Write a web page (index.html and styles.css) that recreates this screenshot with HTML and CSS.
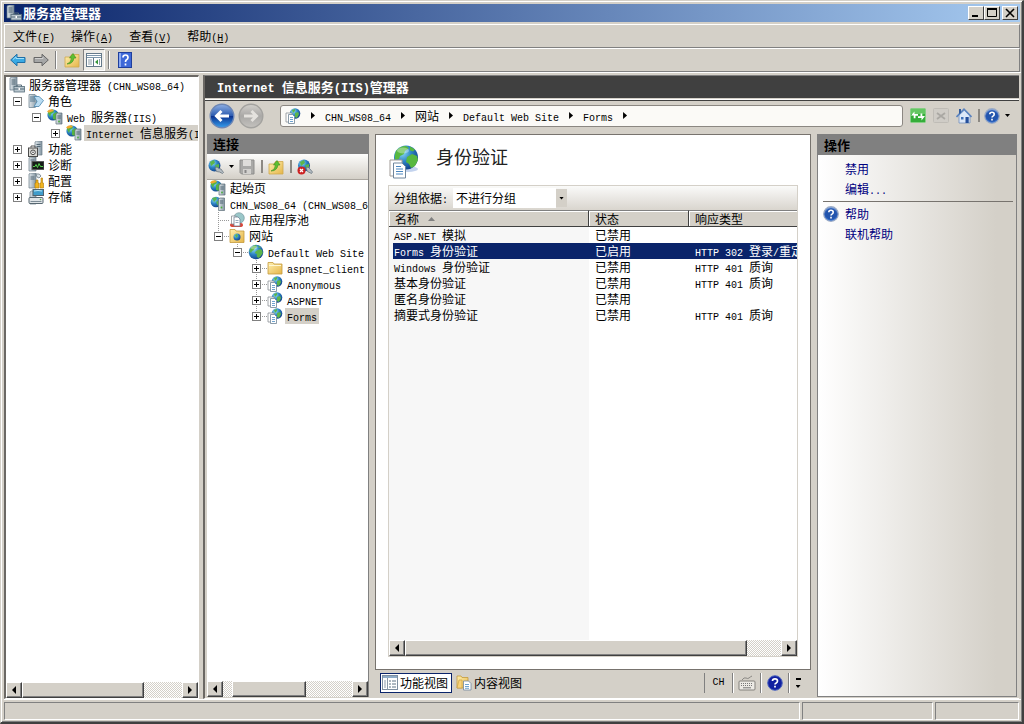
FILE: index.html
```html
<!DOCTYPE html>
<html lang="zh-CN">
<head>
<meta charset="utf-8">
<title>服务器管理器</title>
<link rel="stylesheet" href="styles.css">
</head>
<body>
<svg class="sprite" aria-hidden="true">
  <defs>
    <radialGradient id="g-globe" cx="35%" cy="30%" r="75%"><stop offset="0" stop-color="#8fdcf5"/><stop offset=".5" stop-color="#2c83c4"/><stop offset="1" stop-color="#113f86"/></radialGradient>
    <linearGradient id="g-help" x1="0" y1="0" x2="0" y2="1"><stop offset="0" stop-color="#7fa4e0"/><stop offset=".5" stop-color="#2456b4"/><stop offset="1" stop-color="#3f7ad6"/></linearGradient>
    <linearGradient id="g-back" x1="0" y1="0" x2="0" y2="1"><stop offset="0" stop-color="#8fb0e4"/><stop offset=".48" stop-color="#2d5cb0"/><stop offset=".5" stop-color="#0b2f8c"/><stop offset="1" stop-color="#35a0f0"/></linearGradient>
    <linearGradient id="g-fwd" x1="0" y1="0" x2="0" y2="1"><stop offset="0" stop-color="#d2d0cc"/><stop offset=".5" stop-color="#a9a8a6"/><stop offset="1" stop-color="#c4c2be"/></linearGradient>
    <linearGradient id="g-folder" x1="0" y1="0" x2="1" y2="1"><stop offset="0" stop-color="#fff0b0"/><stop offset="1" stop-color="#e5b548"/></linearGradient>
    <linearGradient id="g-tower" x1="0" y1="0" x2="1" y2="0"><stop offset="0" stop-color="#dfe6ea"/><stop offset="1" stop-color="#8496a2"/></linearGradient>
  </defs>
  <symbol id="i-globe" viewBox="0 0 16 16"><circle cx="8" cy="8" r="7.3" fill="url(#g-globe)"/><path d="M3 3.5Q5 1 8 1l1 2-2 1-1 2-2 1-1 2-1.700-2zM8 7l4-2 2 1 .8 3-2 3-2 2-2-1 0-3-2-1zM10 1.500l3 2-2 .5z" fill="#5cb54a"/><ellipse cx="6" cy="3.600" rx="3.500" ry="1.800" fill="#fff" opacity=".35"/></symbol>
  <symbol id="i-server" viewBox="0 0 16 16"><path d="M1 1l2-1h5v13H1z" fill="url(#g-tower)" stroke="#617786" stroke-width=".7"/><path d="M2.500 3h4M2.500 5h4M2.500 7h4" stroke="#506675"/><rect x="5" y="9.500" width="10.500" height="5.500" fill="#b9c6ce" stroke="#566d7b" stroke-width=".8"/><path d="M8 9.500V8h4.500v1.500M5 12h10.500" fill="none" stroke="#566d7b"/><rect x="9.500" y="11" width="1.500" height="2" fill="#fff"/></symbol>
  <symbol id="i-roles" viewBox="0 0 16 16"><path d="M1 1.500h6l2 2V13l-2 1.500H1z" fill="url(#g-tower)" stroke="#667c8b" stroke-width=".7"/><path d="M2 4h5M2 6h5M2 8h5" stroke="#50778f"/><path d="M6 3.500h5l4.500 4-4.500 6H6l3-5z" fill="#b9dcf2" stroke="#4b87ad" stroke-width=".8"/></symbol>
  <symbol id="i-globe-server" viewBox="0 0 16 16"><circle cx="6" cy="6" r="5.600" fill="url(#g-globe)"/><path d="M.8 4Q2 .6 6 .6L7 3 4 5 3 8zM6 5l4-2 1 3-2 5-3-1z" fill="#55b443"/><path d="M0 2.500Q2 0 5 .3l2 1.400-5 2z" fill="#f0a830"/><path d="M9 5l1.500-1H15v11H9z" fill="url(#g-tower)" stroke="#5d6e78" stroke-width=".7"/><path d="M10.300 7h3.500M10.300 9h3.500" stroke="#4d6272"/><circle cx="12" cy="12.500" r=".9" fill="#4aad3c"/></symbol>
  <symbol id="i-globe-server2" viewBox="0 0 16 16"><circle cx="6" cy="6" r="5.300" fill="url(#g-globe)"/><path d="M2 2l4-1 1 2-3 3zM6 6l3-2 1 3-2 3z" fill="#58b456"/><path d="M8.500 3L10 2h4.500v12.500h-6z" fill="url(#g-tower)" stroke="#5d6e78" stroke-width=".7"/><path d="M9.800 5h3.500M9.800 7h3.500" stroke="#4d6272"/><circle cx="11.500" cy="11.500" r=".9" fill="#4aad3c"/></symbol>
  <symbol id="i-features" viewBox="0 0 16 16"><path d="M7 1l1.500-1H14v14H7z" fill="url(#g-tower)" stroke="#6c7d88" stroke-width=".7"/><path d="M8.500 3.500h4M8.500 5.500h4" stroke="#556977"/><rect x=".5" y="7" width="9" height="8.500" fill="#d8d8d4" stroke="#4b4b4b"/><circle cx="5" cy="11.300" r="2.300" fill="#fff" stroke="#444"/><circle cx="5" cy="11.300" r=".8" fill="#333"/><path d="M3 6.500V5h4v1.500" fill="none" stroke="#555"/></symbol>
  <symbol id="i-diag" viewBox="0 0 16 16"><path d="M1 1l1.500-1H8v14H1z" fill="url(#g-tower)" stroke="#6c7d88" stroke-width=".7"/><path d="M2.500 3h4" stroke="#556977"/><rect x="4" y="4.500" width="12" height="8" fill="#161d16" stroke="#5a5a5a"/><path d="M5 9.500h2l1-2 1.500 3 1.500-4 1.500 3h2.500" fill="none" stroke="#54d04c"/></symbol>
  <symbol id="i-config" viewBox="0 0 16 16"><path d="M1 1l1.500-1H8v15H1z" fill="url(#g-tower)" stroke="#6c7d88" stroke-width=".7"/><path d="M2.500 4h4M2.500 6h4" stroke="#556977"/><path d="M8 1q4-1 5 2l-2 2-2-1z" fill="#d9e2e8" stroke="#6f7d86" stroke-width=".8"/><path d="M8 7h2v3h1v5H7v-5h1zM13 5h1.500v5h1v5h-3.500v-5h1z" fill="#f1b41f" stroke="#b07806" stroke-width=".6"/></symbol>
  <symbol id="i-storage" viewBox="0 0 16 16"><path d="M2 3l1.500-1H8v13H2z" fill="url(#g-tower)" stroke="#6c7d88" stroke-width=".7"/><rect x="5" y=".5" width="10.500" height="6" fill="#3f9dcb" stroke="#50646f"/><path d="M6 2q4-1 8 0" stroke="#bce9fa" fill="none"/><rect x="1" y="8.500" width="14" height="6" rx="1" fill="#dfe4e7" stroke="#566771"/><path d="M2.500 12.500h11" stroke="#7c8b95"/><circle cx="12.500" cy="10.500" r=".8" fill="#55b03f"/></symbol>
  <symbol id="i-folder" viewBox="0 0 16 16"><path d="M1 2.500h5l1 1.500h8v10H1z" fill="url(#g-folder)" stroke="#c49a3c" stroke-width=".8"/><path d="M2 5.500h12" stroke="#fff8d4"/></symbol>
  <symbol id="i-sites" viewBox="0 0 16 16"><path d="M1 1.500h5l1 1.500h8v11.500H1z" fill="url(#g-folder)" stroke="#c49a3c" stroke-width=".8"/><circle cx="8" cy="9" r="3.500" fill="url(#g-globe)"/><path d="M6 7l2-1 1 2-2 2z" fill="#5cb54a"/></symbol>
  <symbol id="i-site-doc" viewBox="0 0 16 16"><circle cx="10" cy="5.500" r="5.300" fill="url(#g-globe)"/><path d="M7 2l3-1 0 2-2 2zM10 5l3-1 1 2-2 4-2-1z" fill="#5cb54a"/><path d="M1 5h6v9H1z" fill="#fff" stroke="#8a9096" stroke-width=".8"/><path d="M3.500 6.500h4l2 2v7h-6z" fill="#fff" stroke="#6f8496" stroke-width=".8"/><path d="M5 9.500h3M5 11.500h3M5 13.500h3" stroke="#4a8bc4" stroke-width=".8"/></symbol>
  <symbol id="i-pool" viewBox="0 0 16 16"><circle cx="10" cy="6" r="5.300" fill="#9ac7c9" stroke="#6f8f96" stroke-width=".6"/><path d="M1 13q0-2 3-2h8q2 0 2 2t-3 2H4q-3 0-3-2z" fill="#d8463a"/><path d="M2.500 4H7v8H2.500z" fill="#fff" stroke="#8a9096" stroke-width=".8"/><path d="M5 5h4l2 2v7H5z" fill="#fff" stroke="#6f8496" stroke-width=".8"/><path d="M6.500 8.500h3M6.500 10.500h3" stroke="#7b96aa" stroke-width=".8"/></symbol>
  <symbol id="i-left" viewBox="0 0 16 16"><path d="M.7 8L7 2.200V5.500h8v5H7v3.300z" fill="#3aaae4" stroke="#1f6fa6"/><path d="M3 7.600l3-2.800v1.700h8" fill="none" stroke="#9fe0fa"/></symbol>
  <symbol id="i-right" viewBox="0 0 16 16"><path d="M15.300 8L9 2.200V5.500H1v5h8v3.300z" fill="#a5a6a6" stroke="#666"/><path d="M2 6.500h8V4.800" fill="none" stroke="#d0d0d0"/></symbol>
  <symbol id="i-up" viewBox="0 0 16 16"><path d="M1 5h5l1.500-2.500H15V15H1z" fill="url(#g-folder)" stroke="#cfa84c" stroke-width=".8"/><path d="M3 12q4-1 4.500-6H5.500L9 1.500 12 6h-2q-1 6-7 6z" fill="#5cc02f" stroke="#3d8b1f" stroke-width=".6"/></symbol>
  <symbol id="i-pane" viewBox="0 0 16 16"><rect x=".5" y="1.500" width="15" height="13" fill="#fff" stroke="#65798a"/><path d="M1 3.500h14M1 5.500h14" stroke="#7c96ab"/><path d="M7.500 6v8.500" stroke="#65798a"/><path d="M2 8h4M2 10h4M2 12h4M13.500 7v6" stroke="#8d9ea9"/><path d="M12 7.500v5L9 10z" fill="#36953a"/></symbol>
  <symbol id="i-qbox" viewBox="0 0 16 16"><rect x="1.500" y=".5" width="13" height="15" fill="#3e68d8" stroke="#203f9c"/><path d="M2 1h2v14H2z" fill="#89a8f2"/><path d="M6 5.500Q6 3 8.500 3T11 5.500Q11 7 9.500 7.800 8.500 8.500 8.500 10M8.500 11.500v2" fill="none" stroke="#fff" stroke-width="1.700"/></symbol>
  <symbol id="i-help" viewBox="0 0 16 16"><circle cx="8" cy="8" r="7.300" fill="url(#g-help)" stroke="#9cabc4" stroke-width="1.200"/><circle cx="8" cy="8" r="5.700" fill="#2355ad"/><path d="M5.800 6.300Q5.800 4.300 8 4.300t2.200 2q0 1.200-1.200 1.800Q8 8.700 8 9.600M8 10.700v1.700" fill="none" stroke="#fff" stroke-width="1.600"/></symbol>
  <symbol id="i-help-dark" viewBox="0 0 16 16"><circle cx="8" cy="8" r="7.300" fill="#111fa0" stroke="#5068c0"/><path d="M5.500 6Q5.500 3.800 8 3.800t2.500 2.200q0 1.300-1.300 2Q8 8.600 8 9.600M8 10.700v1.800" fill="none" stroke="#fff" stroke-width="1.700"/></symbol>
  <symbol id="i-connect" viewBox="0 0 16 16"><circle cx="6.500" cy="6.500" r="6" fill="url(#g-globe)"/><path d="M2 3l4-2 1 3-4 3zM7 6l4-1 0 3-2 3z" fill="#5cb54a"/><path d="M7 9l2-1 2 1.500 2 .5 2.500 3.500-1 1-3-1.500-3-.500z" fill="#b4bcc2" stroke="#626e78" stroke-width=".7"/></symbol>
  <symbol id="i-disconnect" viewBox="0 0 16 16"><circle cx="7" cy="6.500" r="6" fill="url(#g-globe)"/><path d="M3 3l4-2 1 3-4 3zM8 6l4-1 0 3-2 3z" fill="#5cb54a"/><path d="M9 9l2-1 2 2 2.500 3-1 1.500-4-2z" fill="#b4bcc2" stroke="#626e78" stroke-width=".7"/><circle cx="4.500" cy="11.500" r="4" fill="#cc2222"/><path d="M3 10l3 3M6 10l-3 3" stroke="#fff" stroke-width="1.300"/></symbol>
  <symbol id="i-disk" viewBox="0 0 16 16"><path d="M1 1h14v14H2.500L1 13.500z" fill="#a9a9a7" stroke="#8d8d8b"/><rect x="4" y="1" width="8" height="6" fill="#deddda"/><rect x="4" y="10" width="8" height="5" fill="#d2d1ce"/><rect x="5.500" y="11" width="2" height="3" fill="#888"/></symbol>
  <symbol id="i-refresh" viewBox="0 0 16 16"><rect x=".5" y=".5" width="15" height="14" rx="1" fill="#35ad3a" stroke="#86cf84"/><path d="M1 1h14v5H1z" fill="#83d77e" opacity=".6"/><path d="M1 7.500L4.500 3.500v2.500H8v1.800H5.500v2.500H3.700V7.500zM15 8l-3.500 4.500V10H8V8.200h2.500V5.500h1.800V8z" fill="#fff"/></symbol>
  <symbol id="i-stop" viewBox="0 0 16 16"><rect x=".5" y=".5" width="15" height="14" rx="1" fill="#cfccc6" stroke="#bfbcb6"/><path d="M4 5l8 6M12 5l-8 6" stroke="#aaa8a3" stroke-width="1.800"/></symbol>
  <symbol id="i-home" viewBox="0 0 16 16"><path d="M3 7v8h11V7L8.500 2z" fill="#dce8f8" stroke="#7290bc" stroke-width=".8"/><path d="M.5 9L8 1.200 15.500 9" fill="none" stroke="#5a83bf" stroke-width="1.600"/><path d="M3 1h2v4L3 6z" fill="#315b9d"/><rect x="9.500" y="9" width="3.200" height="6" fill="#244f9b"/><rect x="5" y="9" width="2.500" height="2.500" fill="#3e71b8"/></symbol>
  <symbol id="i-keys" viewBox="0 0 18 16"><rect x="1" y="6" width="16" height="9" rx="1" fill="#eceae5" stroke="#83817c"/><path d="M3 8.500h12M3 10.500h12" stroke="#777" stroke-dasharray="1 1"/><path d="M5 12.800h8" stroke="#777"/><path d="M4 5q2-3 4-2t3 0 3-2" fill="none" stroke="#8b8985"/></symbol>
  <symbol id="i-features-view" viewBox="0 0 16 16"><rect x=".5" y=".5" width="15" height="14" fill="#fff" stroke="#7e8ea0"/><path d="M1 2h14" stroke="#8facc8" stroke-width="2"/><path d="M5.500 3v12M2 6h2M2 8h2M2 10h2M2 12h2" stroke="#8b9aa8"/><path d="M7 6h2M10 6h4M7 9h2M10 9h4M7 12h2M10 12h4" stroke="#5f7284"/></symbol>
  <symbol id="i-content-view" viewBox="0 0 16 16"><path d="M1 1h4l1 1.500h6V13H1z" fill="url(#g-folder)" stroke="#c49a3c" stroke-width=".8"/><path d="M1 13L3 5h3v8z" fill="#f8d27a" stroke="#c49a3c" stroke-width=".6"/><path d="M7.500 6h5l2.500 2.500V15H7.500z" fill="#fff" stroke="#7286a0" stroke-width=".8"/><path d="M9 9.500h4M9 11.500h4M9 13.300h4" stroke="#4a8bc4" stroke-width=".8"/></symbol>
</svg>

<div class="window">
  <header class="titlebar">
    <svg class="icon" aria-hidden="true"><use href="#i-server"/></svg>
    <h1 class="titlebar-text">服务器管理器</h1>
    <button class="win-btn" aria-label="最小化"><svg viewBox="0 0 12 10"><path d="M2 8h6" stroke="#000" stroke-width="2"/></svg></button>
    <button class="win-btn" aria-label="最大化"><svg viewBox="0 0 12 10"><path d="M1.500 1.500h9v7h-9zM1 1.500h10" fill="none" stroke="#000"/><path d="M1 1h10" stroke="#000" stroke-width="2"/></svg></button>
    <button class="win-btn win-close" aria-label="关闭"><svg viewBox="0 0 12 10"><path d="M2 1l8 8M10 1L2 9" stroke="#000" stroke-width="1.600"/></svg></button>
  </header>

  <nav class="menubar">
    <button class="menu">文件<span class="en">(<u>F</u>)</span></button>
    <button class="menu">操作<span class="en">(<u>A</u>)</span></button>
    <button class="menu">查看<span class="en">(<u>V</u>)</span></button>
    <button class="menu">帮助<span class="en">(<u>H</u>)</span></button>
  </nav>

  <div class="toolbar">
    <button class="tool" aria-label="后退"><svg class="icon" aria-hidden="true"><use href="#i-left"/></svg></button>
    <button class="tool" aria-label="前进"><svg class="icon" aria-hidden="true"><use href="#i-right"/></svg></button>
    <span class="sep"></span>
    <button class="tool" aria-label="上一级"><svg class="icon" aria-hidden="true"><use href="#i-up"/></svg></button>
    <button class="tool tool-on" aria-label="显示/隐藏控制台树"><svg class="icon" aria-hidden="true"><use href="#i-pane"/></svg></button>
    <span class="sep"></span>
    <button class="tool" aria-label="帮助"><svg class="icon" aria-hidden="true"><use href="#i-qbox"/></svg></button>
  </div>

  <div class="main">
    <aside class="console">
      <ul class="tree">
        <li><div class="node"><svg class="icon" aria-hidden="true"><use href="#i-server"/></svg><span class="label">服务器管理器<span class="en"> (CHN_WS08_64)</span></span></div>
          <ul class="root">
            <li><div class="node"><span class="slot"><button class="exp" aria-label="折叠"></button></span><svg class="icon" aria-hidden="true"><use href="#i-roles"/></svg><span class="label">角色</span></div>
              <ul>
                <li><div class="node"><span class="slot"><button class="exp" aria-label="折叠"></button></span><svg class="icon" aria-hidden="true"><use href="#i-globe-server"/></svg><span class="label"><span class="en">Web </span>服务器<span class="en">(IIS)</span></span></div>
                  <ul>
                    <li><div class="node"><span class="slot"><button class="exp plus" aria-label="展开"></button></span><svg class="icon" aria-hidden="true"><use href="#i-globe-server"/></svg><span class="label selected"><span class="en">Internet </span>信息服务<span class="en">(IIS)</span>管理器</span></div></li>
                  </ul>
                </li>
              </ul>
            </li>
            <li><div class="node"><span class="slot"><button class="exp plus" aria-label="展开"></button></span><svg class="icon" aria-hidden="true"><use href="#i-features"/></svg><span class="label">功能</span></div></li>
            <li><div class="node"><span class="slot"><button class="exp plus" aria-label="展开"></button></span><svg class="icon" aria-hidden="true"><use href="#i-diag"/></svg><span class="label">诊断</span></div></li>
            <li><div class="node"><span class="slot"><button class="exp plus" aria-label="展开"></button></span><svg class="icon" aria-hidden="true"><use href="#i-config"/></svg><span class="label">配置</span></div></li>
            <li><div class="node"><span class="slot"><button class="exp plus" aria-label="展开"></button></span><svg class="icon" aria-hidden="true"><use href="#i-storage"/></svg><span class="label">存储</span></div></li>
          </ul>
        </li>
      </ul>
      <div class="scrollbar">
        <button class="sb-btn" aria-label="向左滚动"><svg viewBox="0 0 8 8"><path d="M6 0v8L2 4z"/></svg></button>
        <div class="track"><div class="thumb thumb-console"></div></div>
        <button class="sb-btn" aria-label="向右滚动"><svg viewBox="0 0 8 8"><path d="M2 0v8l4-4z"/></svg></button>
      </div>
    </aside>

    <section class="iis">
      <h2 class="iis-title"><span class="en">Internet </span>信息服务<span class="en">(IIS)</span>管理器</h2>
      <div class="nav">
        <div class="travel">
          <button class="round" aria-label="后退"><svg viewBox="0 0 26 26"><circle cx="13" cy="13" r="11.800" fill="url(#g-back)" stroke="#6d86b4" stroke-width="1.400"/><path d="M20 13H8M12.500 8l-5 5 5 5" fill="none" stroke="#fff" stroke-width="3"/></svg></button>
          <button class="round" aria-label="前进"><svg viewBox="0 0 26 26"><circle cx="13" cy="13" r="11.800" fill="url(#g-fwd)" stroke="#a3a29f" stroke-width="1.400"/><path d="M6 13h12M13.500 8l5 5-5 5" fill="none" stroke="#e4e2de" stroke-width="3"/></svg></button>
        </div>
        <div class="address">
          <svg class="icon" aria-hidden="true"><use href="#i-site-doc"/></svg>
          <span class="chev"></span><a class="crumb" href="#server"><span class="en">CHN_WS08_64</span></a>
          <span class="chev"></span><a class="crumb" href="#sites">网站</a>
          <span class="chev"></span><a class="crumb" href="#default"><span class="en">Default Web Site</span></a>
          <span class="chev"></span><a class="crumb" href="#forms"><span class="en">Forms</span></a>
          <span class="chev"></span>
        </div>
        <div class="nav-tools">
          <button class="tool" aria-label="刷新"><svg class="icon" aria-hidden="true"><use href="#i-refresh"/></svg></button>
          <button class="tool" aria-label="停止"><svg class="icon" aria-hidden="true"><use href="#i-stop"/></svg></button>
          <button class="tool" aria-label="主页"><svg class="icon" aria-hidden="true"><use href="#i-home"/></svg></button>
          <span class="bar"></span>
          <button class="tool tool-drop" aria-label="帮助"><svg class="icon" aria-hidden="true"><use href="#i-help"/></svg><span class="drop"></span></button>
        </div>
      </div>

      <div class="panes">
        <aside class="connections">
          <h3 class="pane-title">连接</h3>
          <div class="conn-tools">
            <button class="tool tool-drop" aria-label="连接"><svg class="icon" aria-hidden="true"><use href="#i-connect"/></svg><span class="drop"></span></button>
            <button class="tool" aria-label="保存连接"><svg class="icon" aria-hidden="true"><use href="#i-disk"/></svg></button>
            <span class="bar"></span>
            <button class="tool" aria-label="向上"><svg class="icon" aria-hidden="true"><use href="#i-up"/></svg></button>
            <span class="bar"></span>
            <button class="tool" aria-label="断开连接"><svg class="icon" aria-hidden="true"><use href="#i-disconnect"/></svg></button>
          </div>
          <ul class="tree lines">
            <li><div class="node"><svg class="icon" aria-hidden="true"><use href="#i-globe-server"/></svg><span class="label">起始页</span></div></li>
            <li><div class="node"><svg class="icon" aria-hidden="true"><use href="#i-globe-server2"/></svg><span class="label"><span class="en">CHN_WS08_64 (CHN_WS08_64)</span></span></div>
              <ul class="root">
                <li><div class="node"><span class="slot"></span><svg class="icon" aria-hidden="true"><use href="#i-pool"/></svg><span class="label">应用程序池</span></div></li>
                <li><div class="node"><span class="slot"><button class="exp" aria-label="折叠"></button></span><svg class="icon" aria-hidden="true"><use href="#i-sites"/></svg><span class="label">网站</span></div>
                  <ul>
                    <li><div class="node"><span class="slot"><button class="exp" aria-label="折叠"></button></span><svg class="icon" aria-hidden="true"><use href="#i-globe"/></svg><span class="label"><span class="en">Default Web Site</span></span></div>
                      <ul>
                        <li><div class="node"><span class="slot"><button class="exp plus" aria-label="展开"></button></span><svg class="icon" aria-hidden="true"><use href="#i-folder"/></svg><span class="label"><span class="en">aspnet_client</span></span></div></li>
                        <li><div class="node"><span class="slot"><button class="exp plus" aria-label="展开"></button></span><svg class="icon" aria-hidden="true"><use href="#i-site-doc"/></svg><span class="label"><span class="en">Anonymous</span></span></div></li>
                        <li><div class="node"><span class="slot"><button class="exp plus" aria-label="展开"></button></span><svg class="icon" aria-hidden="true"><use href="#i-site-doc"/></svg><span class="label"><span class="en">ASPNET</span></span></div></li>
                        <li><div class="node"><span class="slot"><button class="exp plus" aria-label="展开"></button></span><svg class="icon" aria-hidden="true"><use href="#i-site-doc"/></svg><span class="label selected"><span class="en">Forms</span></span></div></li>
                      </ul>
                    </li>
                  </ul>
                </li>
              </ul>
            </li>
          </ul>
          <div class="scrollbar">
            <button class="sb-btn" aria-label="向左滚动"><svg viewBox="0 0 8 8"><path d="M6 0v8L2 4z"/></svg></button>
            <div class="track"><div class="thumb thumb-conn"></div></div>
            <button class="sb-btn" aria-label="向右滚动"><svg viewBox="0 0 8 8"><path d="M2 0v8l4-4z"/></svg></button>
          </div>
        </aside>

        <main class="center">
          <div class="feature">
            <div class="feature-head">
              <svg class="feature-icon" viewBox="0 0 32 34" aria-hidden="true"><ellipse cx="19" cy="24" rx="10" ry="3" fill="#c3d3ee"/><circle cx="17" cy="12.500" r="12" fill="url(#g-globe)"/><path d="M7 6q4-5 10-5l3 2-4 3-1 3-4 2-1 3-4 1q-1-5 1-9zM18 12l5-3 5 2 1 4-3 6-4 2-2-4-3-2zM21 1.500l5 3-2 2-3-1z" fill="#57b83f"/><ellipse cx="14" cy="5.500" rx="6" ry="3" fill="#fff" opacity=".35"/><path d="M1 15h12v16H1z" fill="#fff" stroke="#a19b96"/><path d="M4.500 18H13l3.500 3.500V33h-12z" fill="#fff" stroke="#71879d"/><path d="M7 21.500h5M7 24h7M7 26.500h7M7 29h7" stroke="#4a86bf"/></svg>
              <h2 class="feature-title">身份验证</h2>
            </div>
            <div class="list">
              <div class="groupbar">
                <label for="group">分组依据<span class="en">:</span></label>
                <select id="group" class="select"><option>不进行分组</option></select><span class="select-arrow"><span class="drop"></span></span>
              </div>
              <div class="table-wrap">
                <table class="table">
                  <thead><tr><th class="c-name">名称<span class="sort"></span></th><th class="c-state">状态</th><th>响应类型</th></tr></thead>
                  <tbody>
                    <tr><td><span class="en">ASP.NET </span>模拟</td><td>已禁用</td><td></td></tr>
                    <tr class="row-selected"><td><span class="en">Forms </span>身份验证</td><td>已启用</td><td><span class="en">HTTP 302 </span>登录<span class="en">/</span>重定向</td></tr>
                    <tr><td><span class="en">Windows </span>身份验证</td><td>已禁用</td><td><span class="en">HTTP 401 </span>质询</td></tr>
                    <tr><td>基本身份验证</td><td>已禁用</td><td><span class="en">HTTP 401 </span>质询</td></tr>
                    <tr><td>匿名身份验证</td><td>已禁用</td><td></td></tr>
                    <tr><td>摘要式身份验证</td><td>已禁用</td><td><span class="en">HTTP 401 </span>质询</td></tr>
                  </tbody>
                </table>
              </div>
              <div class="scrollbar">
                <button class="sb-btn" aria-label="向左滚动"><svg viewBox="0 0 8 8"><path d="M6 0v8L2 4z"/></svg></button>
                <div class="track"><div class="thumb thumb-list"></div></div>
                <button class="sb-btn" aria-label="向右滚动"><svg viewBox="0 0 8 8"><path d="M2 0v8l4-4z"/></svg></button>
              </div>
            </div>
          </div>
          <div class="views">
            <button class="view view-on"><svg class="icon" aria-hidden="true"><use href="#i-features-view"/></svg>功能视图</button>
            <button class="view"><svg class="icon" aria-hidden="true"><use href="#i-content-view"/></svg>内容视图</button>
            <div class="langbar">
              <button class="lang"><span class="en">CH</span></button>
              <button class="lang" aria-label="键盘"><svg class="keys" aria-hidden="true"><use href="#i-keys"/></svg></button>
              <button class="lang" aria-label="帮助"><svg class="icon" aria-hidden="true"><use href="#i-help-dark"/></svg></button>
              <button class="lang lang-more" aria-label="选项"><span class="dash"></span><span class="drop"></span></button>
            </div>
          </div>
        </main>

        <aside class="actions">
          <h3 class="pane-title">操作</h3>
          <ul class="action-list">
            <li><a href="#disable">禁用</a></li>
            <li><a href="#edit">编辑<span class="en">...</span></a></li>
          </ul>
          <ul class="action-list action-help">
            <li><svg class="icon" aria-hidden="true"><use href="#i-help"/></svg><a href="#help">帮助</a></li>
            <li><a href="#online">联机帮助</a></li>
          </ul>
        </aside>
      </div>
    </section>
  </div>

  <footer class="statusbar">
    <div class="cell"></div>
    <div class="cell cell-mid"></div>
    <div class="cell cell-end"></div>
  </footer>
</div>
</body>
</html>
```

FILE: styles.css
```css
* { box-sizing: border-box; }

body {
  margin: 0;
  font: 12px/16px "Noto Sans CJK SC", sans-serif;
  color: #000;
  background: #d4d0c8;
}

.sprite { position: absolute; width: 0; height: 0; }

h1, h2, h3, ul { margin: 0; padding: 0; }
ul { list-style: none; }
svg { display: block; flex: none; }

button {
  margin: 0;
  padding: 0;
  border: 0;
  background: none;
  font: inherit;
  color: inherit;
}

/* Latin runs are half as wide as a Chinese character;
   the zero line height keeps them from making a mixed line taller */
.en {
  font-family: "Liberation Mono", monospace;
  font-size: 10px;
  line-height: 0;
  white-space: pre;
}

.icon { width: 16px; height: 16px; }

.drop {
  width: 5px;
  height: 3px;
  background: #000;
  clip-path: polygon(0 0, 100% 0, 50% 100%);
}

/* Window frame */
.window {
  display: flex;
  flex-direction: column;
  height: 100vh;
  padding: 3px 1px 2px 3px;
  border: 1px solid #d4d0c8;
  border-right: 2px solid #404040;
  border-bottom: 2px solid #404040;
  box-shadow: inset 1px 1px #fff, inset -1px -1px #808080;
  background: #d4d0c8;
}

.titlebar {
  display: flex;
  align-items: center;
  flex: none;
  height: 18px;
  padding: 0 2px;
  margin-right: 1px;
  background: linear-gradient(to right, #0a246a, #a6caf0);
}

.titlebar-text {
  flex: 1;
  padding-left: 1px;
  font-size: 13px;
  line-height: 18px;
  color: #fff;
}

.win-btn {
  width: 16px;
  height: 14px;
  padding: 1px;
  border: 1px solid #fff;
  border-right-color: #404040;
  border-bottom-color: #404040;
  background: #d4d0c8;
}

.win-btn svg { width: 12px; height: 10px; }
.win-close { margin-left: 2px; }

.menubar,
.toolbar {
  display: flex;
  align-items: center;
  flex: none;
  height: 24px;
  margin-right: 1px;
  border: 1px solid #fff;
  border-right-color: #808080;
  border-bottom-color: #808080;
}

.menubar { gap: 16px; margin-top: 2px; padding-left: 8px; }
.toolbar { padding-left: 1px; }

.tool {
  display: flex;
  align-items: center;
  justify-content: center;
  height: 22px;
  width: 23px;
}

.tool-on {
  width: 22px;
  border: 1px solid #808080;
  border-right-color: #fff;
  border-bottom-color: #fff;
  background: #eeece8;
}

.sep {
  width: 2px;
  height: 18px;
  margin: 0 3px;
  border-left: 1px solid #808080;
  border-right: 1px solid #fff;
}

.tool-drop { width: 28px; gap: 5px; }

.bar { width: 2px; height: 13px; background: #8c8983; }

/* Split area */
.main {
  display: flex;
  flex: 1;
  gap: 4px;
  min-height: 0;
  padding: 2px 2px 0 0;
  border-top: 1px solid #fff;
}

.console {
  display: flex;
  flex: none;
  flex-direction: column;
  width: 195px;
  border: 2px solid #6b6864;
  border-right: 1px solid #fff;
  border-bottom: 1px solid #fff;
  background: #fff;
}

.tree {
  flex: 1;
  min-height: 0;
  padding-left: 3px;
  overflow: hidden;
}

.tree ul { padding-left: 19px; }
.tree .root { padding-left: 0; }

.node { display: flex; align-items: center; height: 16px; }
.node .icon { margin-right: 1px; }
.slot { flex: none; width: 19px; height: 16px; padding: 4px; }

.label {
  flex: none;
  margin-left: 1px;
  padding: 0 2px;
  line-height: 16px;
  white-space: pre;
}

.selected { background: #d4d0c8; }

.exp {
  display: block;
  width: 9px;
  height: 9px;
  border: 1px solid #808080;
  background: linear-gradient(#000, #000) center / 5px 1px no-repeat #fff;
}

.plus {
  background:
    linear-gradient(#000, #000) center / 5px 1px no-repeat,
    linear-gradient(#000, #000) center / 1px 5px no-repeat #fff;
}

.lines .slot {
  background:
    repeating-linear-gradient(to right, #999 0 1px, transparent 1px 2px) 8px 8px / 11px 1px no-repeat,
    repeating-linear-gradient(to bottom, #999 0 1px, transparent 1px 2px) 8px 0 / 1px 16px no-repeat;
}

.lines li:last-child > .node .slot {
  background-size: 11px 1px, 1px 8px;
}

/* Scroll bars */
.scrollbar { display: flex; flex: none; height: 16px; }

.sb-btn,
.thumb {
  border: 1px solid #fff;
  border-right-color: #404040;
  border-bottom-color: #404040;
  background: #d4d0c8;
  box-shadow: inset -1px -1px #808080;
}

.sb-btn {
  display: flex;
  align-items: center;
  justify-content: center;
  flex: none;
  width: 16px;
}

.sb-btn svg { width: 8px; height: 8px; }

.track {
  flex: 1;
  background: repeating-conic-gradient(#fff 0 25%, #d4d0c8 0 50%) 0 0 / 2px 2px;
}

.thumb { height: 16px; }
.thumb-console { width: 76%; }
.thumb-conn { width: 57%; margin-left: 7%; }
.thumb-list { width: 91%; }

/* IIS manager */
.iis {
  display: flex;
  flex: 1;
  flex-direction: column;
  min-width: 0;
  padding-bottom: 1px;
  border-left: 2px solid #6b6864;
  border-top: 1px solid #808080;
  border-bottom: 1px solid #fff;
}

.iis-title {
  flex: none;
  height: 22px;
  padding-left: 12px;
  font-size: 13px;
  line-height: 22px;
  color: #fff;
  background: #404040;
}

.iis-title .en { font-size: 12px; }

.nav {
  display: flex;
  align-items: center;
  flex: none;
  height: 34px;
  margin-top: 2px;
  padding: 0 8px 4px 4px;
  border-top: 1px solid #404040;
  box-shadow: 0 -1px #fff;
}

.travel { display: flex; gap: 3px; margin-right: 16px; }
.round svg { width: 26px; height: 26px; }

.address {
  display: flex;
  align-items: center;
  flex: 1;
  gap: 10px;
  height: 22px;
  padding-left: 4px;
  border: 1px solid #8b8782;
  border-radius: 3px;
  background: #fbfaf7;
}

.crumb { color: #000; text-decoration: none; }

.chev {
  width: 4px;
  height: 7px;
  background: #000;
  clip-path: polygon(0 0, 100% 50%, 0 100%);
}

.nav-tools { display: flex; align-items: center; padding-left: 3px; }
.nav-tools .bar { margin: 0 3px; }

.panes { display: flex; flex: 1; gap: 6px; min-height: 0; padding: 0 2px; }

.pane-title {
  flex: none;
  height: 20px;
  padding-left: 6px;
  font-size: 13px;
  line-height: 20px;
  background: #808080;
}

.connections {
  display: flex;
  flex: none;
  flex-direction: column;
  width: 162px;
  border-right: 1px solid #808080;
  background: #fff;
}

.conn-tools {
  display: flex;
  align-items: center;
  flex: none;
  height: 26px;
  border-bottom: 1px solid #aaa69f;
  background: linear-gradient(#fdfdfc, #d4d0c8);
}

.conn-tools .bar { margin: 0 1px 0 3px; }

.center { display: flex; flex: 1; flex-direction: column; min-width: 0; }

.feature {
  display: flex;
  flex: 1;
  flex-direction: column;
  min-height: 0;
  padding: 10px 12px 12px;
  border: 1px solid #77736e;
  background: #fff;
}

.feature-head { display: flex; gap: 15px; height: 40px; padding-left: 1px; }
.feature-icon { width: 32px; height: 34px; }
.feature-title { font-size: 18px; font-weight: 400; line-height: 22px; color: #222; }

.list {
  display: flex;
  flex: 1;
  flex-direction: column;
  min-height: 0;
  border: 1px solid #d4d0c8;
}

.groupbar {
  display: flex;
  align-items: center;
  flex: none;
  height: 24px;
  padding-left: 5px;
  background: linear-gradient(#fafaf9, #d9d5ce);
}

.select {
  width: 103px;
  height: 20px;
  margin-left: 5px;
  padding: 0 3px;
  border: 0;
  border-radius: 0;
  appearance: none;
  background: #fff;
  font: inherit;
  color: #000;
}

.select-arrow {
  display: flex;
  align-items: center;
  justify-content: center;
  width: 11px;
  height: 18px;
  background: #d4d0c8;
}

.table-wrap {
  flex: 1;
  min-height: 0;
  overflow: hidden;
  background: linear-gradient(#f7f7f7, #f7f7f7) 0 0 / 200px 100% no-repeat;
}

.table { width: 100%; border-collapse: separate; border-spacing: 0; table-layout: fixed; }

.table th,
.table td {
  height: 16px;
  padding: 0 0 0 6px;
  font-weight: 400;
  line-height: 16px;
  text-align: left;
  vertical-align: top;
  white-space: nowrap;
  overflow: hidden;
}

.table td:first-child { padding-left: 5px; }

.table th {
  height: 17px;
  line-height: 15px;
  border-top: 1px solid #808080;
  border-bottom: 1px solid #404040;
  border-right: 1px solid #404040;
  background: #d4d0c8;
  box-shadow: inset 1px 1px #fff;
}

.table th:last-child { border-right: 0; }
.c-name { width: 200px; }
.c-state { width: 100px; }

.sort {
  display: inline-block;
  width: 7px;
  height: 4px;
  margin: 0 0 3px 9px;
  background: #808080;
  clip-path: polygon(50% 0, 100% 100%, 0 100%);
}

.row-selected td { color: #fff; background: #0a246a; }
.row-selected td:first-child {
  background: linear-gradient(to right, transparent 4px, #0a246a 4px);
}

/* View switch and language bar */
.views { display: flex; flex: none; gap: 2px; height: 27px; padding: 3px 4px 0 5px; }

.view {
  display: flex;
  align-items: center;
  gap: 2px;
  height: 20px;
  padding: 0 3px 0 1px;
  border: 1px solid transparent;
}

.view-on { border-color: #0a246a; background: #fff; }

.langbar { display: flex; height: 20px; margin-left: auto; border-left: 1px solid #808080; }

.lang {
  display: flex;
  align-items: center;
  justify-content: center;
  width: 28px;
  border-right: 1px solid #808080;
  box-shadow: 1px 0 #fff;
}

.keys { width: 18px; height: 16px; }
.lang-more { flex-direction: column; gap: 5px; width: 18px; border: 0; box-shadow: none; }
.dash { width: 5px; height: 2px; background: #000; }

/* Actions */
.actions {
  flex: none;
  width: 200px;
  border: 1px solid #808080;
  background: linear-gradient(to right, #fff, #d4d0c8 90%);
}

.action-list { padding: 4px 0 2px 27px; }
.action-list li { display: flex; align-items: center; height: 20px; }
.action-list a { color: #00007f; text-decoration: none; }

.action-help { margin: 0 3px 0 5px; padding: 2px 0 0; border-top: 1px solid #77736e; }
.action-help li { padding-left: 22px; }
.action-help li:first-child { gap: 6px; padding-left: 0; }

/* Status bar */
.statusbar { display: flex; flex: none; gap: 2px; height: 21px; padding: 2px 2px 0 0; border-top: 1px solid #fff; }

.cell {
  flex: 1;
  border: 1px solid #808080;
  border-right-color: #fff;
  border-bottom-color: #fff;
}

.cell-mid { flex: 0 0 131px; }
.cell-end { flex: 0 0 84px; }
```
